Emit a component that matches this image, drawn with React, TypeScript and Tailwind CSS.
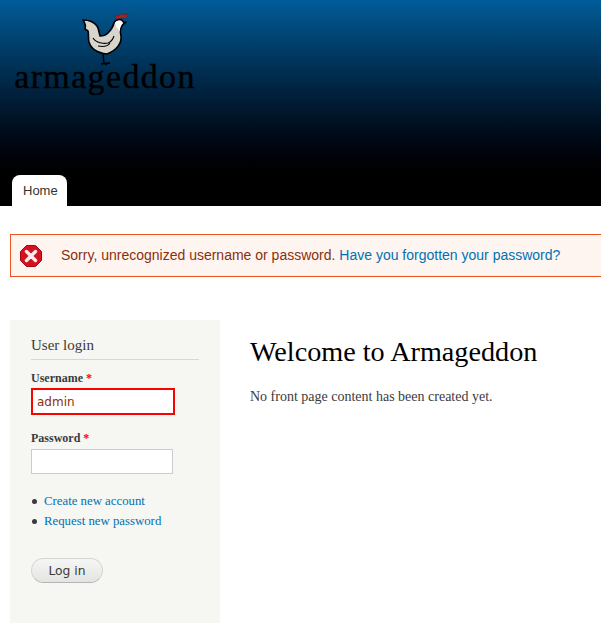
import { JSX } from "react"

const Rooster = (): JSX.Element => (
    <svg width="60" height="60" viewBox="75 9 60 60" className="block">
        <path d="M103 54 L104 63 M101 64 L110 63 M104 63 L107 65" fill="none" stroke="#000" strokeWidth="1.5" />
        <path d="M83 20 C89 20 94 22 97 26 C99 29 99 33 100 36 C103 36 106 35 108 33 C111 30 113 27 114 23 C115 20 119 19 122 20 L124 23 L122 26 C120 29 120 32 121 36 C122 43 117 50 107 54 C98 53 91 49 89 42 C88 38 89 35 88 31 L85 29 C86 26 85 23 83 20 Z" fill="#d8d5cc" stroke="#000" strokeWidth="1.6" strokeLinejoin="round" />
        <path d="M115 23 C116 21 119 20 121 21 L123 23 L121 25 C120 27 120 29 120 31 C117 29 116 26 115 23 Z" fill="#fff" />
        <path d="M115 16 L119 16 L121 14 L124 15 L128 14 L126 18 L120 18 L117 19 Z" fill="#b0201f" stroke="#7a1512" strokeWidth="0.5" />
        <path d="M93 38 C96 43 104 44 108 43 C111 42 113 39 114 36 M98 46 C103 47 108 46 110 43" fill="none" stroke="#000" strokeWidth="1.1" />
        <path d="M124 22 L127 21 L125 25 Z" fill="#000" />
    </svg>
)

const ErrorIcon = (): JSX.Element => (
    <svg width="24" height="24" viewBox="0 0 24 24" className="block shrink-0">
        <polygon points="7.5,1.5 16.5,1.5 22.5,7.5 22.5,16.5 16.5,22.5 7.5,22.5 1.5,16.5 1.5,7.5" fill="#d8101e" stroke="#a50a14" strokeWidth="1" strokeLinejoin="round" />
        <path d="M7.5 7.5 L16.5 16.5 M16.5 7.5 L7.5 16.5" stroke="#f4eeee" strokeWidth="3.4" strokeLinecap="round" />
    </svg>
)

export default function App(): JSX.Element {
    return (
        <div className="w-[601px] h-[642px] overflow-hidden bg-white font-['Liberation_Serif',serif] text-[#3b3b3b]">
            <header className="h-[206px] flex flex-col justify-between bg-gradient-to-b from-[#015c99] to-[#000000] to-[95%]">
                <div className="flex flex-col items-center w-[180px] ml-[15px] pt-[9px]">
                    <Rooster />
                    <div className="mt-[-10px] h-[36px] leading-[36px] text-[34px] tracking-[1.35px] text-black [-webkit-text-stroke:0.4px_#000] whitespace-nowrap">armageddon</div>
                </div>
                <nav className="pl-[12px]">
                    <a className="block w-[55px] h-[31px] pl-[11px] pt-[7px] bg-white rounded-t-[8px] font-['Liberation_Sans',sans-serif] text-[13px] leading-[18px] text-[#333333]">Home</a>
                </nav>
            </header>

            <div className="mt-[28px] ml-[10px] -mr-4 h-[43px] flex items-center gap-[18px] pl-[8px] border border-[#ed541d] bg-[#fef5f1] font-['Liberation_Sans',sans-serif] text-[14px] text-[#8c2e0b] whitespace-nowrap">
                <ErrorIcon />
                <p>Sorry, unrecognized username or password. <a className="text-[#0071b3]">Have you forgotten your password?</a></p>
            </div>

            <div className="flex mt-[43px] ml-[10px]">
                <aside className="w-[210px] h-[303px] shrink-0 bg-[#f6f6f2] pt-[15px] px-[21px]">
                    <h2 className="text-[15px] leading-[20px] pb-[4px] border-b border-[#d6d6d6] text-[#3b3b3b] w-[168px]">User login</h2>
                    <label className="block mt-[10px] text-[12px] leading-[16px] font-bold">Username <span className="text-[#ff0000]">*</span></label>
                    <div className="mt-[2px] w-[144px] h-[27px] border-2 border-[#ff0000] bg-white pl-[4px] font-['DejaVu_Sans',sans-serif] text-[12px] leading-[24px] text-[#8c2e0b]">admin</div>
                    <label className="block mt-[15px] text-[12px] leading-[16px] font-bold">Password <span className="text-[#ff0000]">*</span></label>
                    <div className="mt-[3px] w-[142px] h-[25px] border border-[#cccccc] bg-white" />
                    <ul className="mt-[19px] flex flex-col gap-[4px] text-[12.8px] leading-[16px] text-[#0071b3]">
                        <li className="flex items-center gap-[7px] pl-[1px]"><span className="w-[5px] h-[5px] rounded-full bg-[#3b3b3b]" /><a>Create new account</a></li>
                        <li className="flex items-center gap-[7px] pl-[1px]"><span className="w-[5px] h-[5px] rounded-full bg-[#3b3b3b]" /><a>Request new password</a></li>
                    </ul>
                    <button className="block mt-[29px] w-[72px] h-[25px] pt-[1px] rounded-[15px] border border-[#d4d4d4] border-b-[#b4b4b4] bg-gradient-to-b from-[#f6f6f5] to-[#e4e4e2] font-['DejaVu_Sans',sans-serif] text-[12.3px] text-[#3a3a3a]">Log in</button>
                </aside>
                <main className="pl-[30px] pt-[15px]">
                    <h1 className="text-[28.2px] leading-[34px] text-black">Welcome to Armageddon</h1>
                    <p className="mt-[19px] text-[14px] leading-[18px]">No front page content has been created yet.</p>
                </main>
            </div>
        </div>
    )
}
